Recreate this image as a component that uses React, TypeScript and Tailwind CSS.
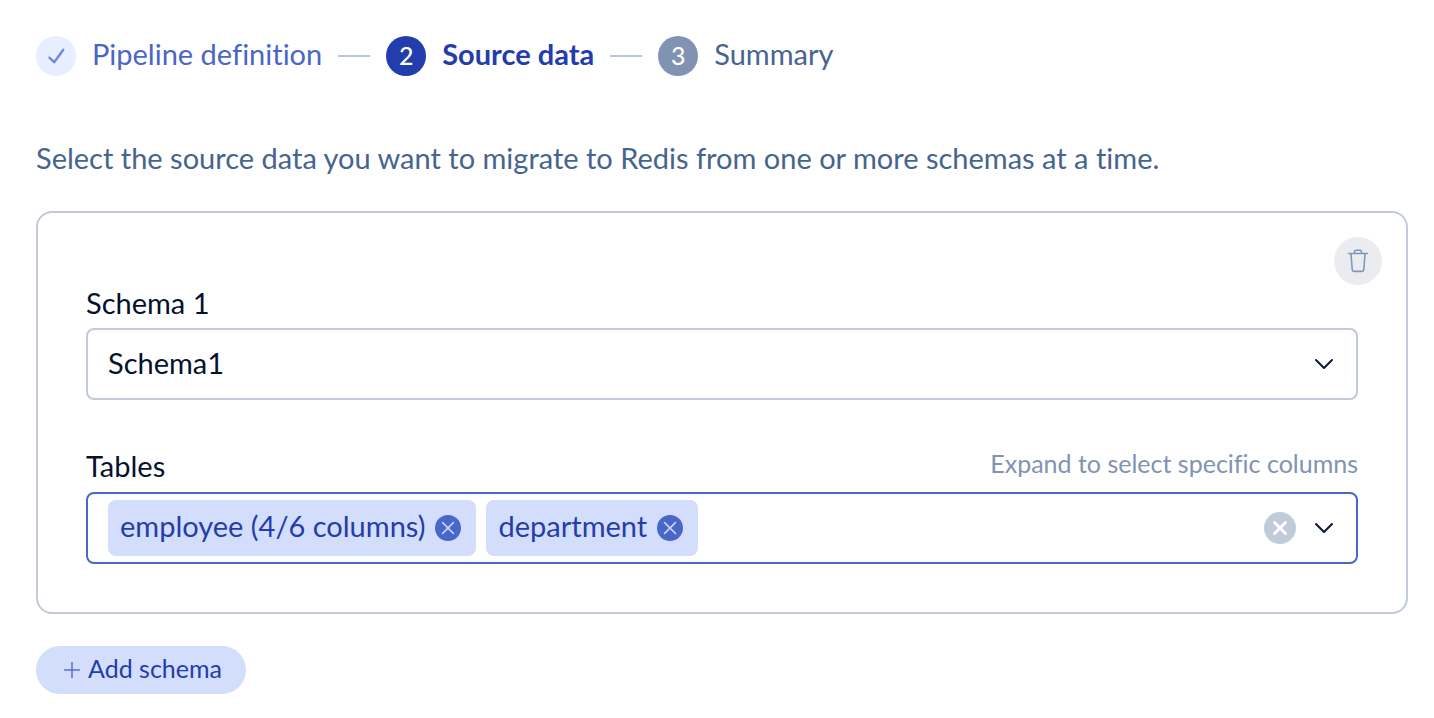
import { useState } from "react";

function CheckIcon() {
  return (
    <svg className="size-5" viewBox="0 0 20 20" fill="none" stroke="#7186dc" strokeWidth="2.3" strokeLinecap="round" strokeLinejoin="round" aria-hidden="true">
      <path d="M3.4 11.6 8.2 16.2 17.3 3.8" />
    </svg>
  );
}

function TrashIcon() {
  return (
    <svg className="size-6" viewBox="0 0 24 24" fill="none" stroke="#7f97b8" strokeWidth="1.6" strokeLinecap="round" strokeLinejoin="round" aria-hidden="true">
      <path d="M2.5 4.5h19M8.5 4.2V2.8C8.5 1.8 9 1.3 10 1.3h4c1 0 1.5.5 1.5 1.5v1.4M5 4.8l1.2 15.4c.1 1.4.8 2.2 2 2.2h7.6c1.2 0 1.9-.8 2-2.2L19 4.8" />
    </svg>
  );
}

function ChevronIcon() {
  return (
    <svg className="size-6" viewBox="0 0 24 24" fill="none" stroke="#091a33" strokeWidth="2" strokeLinecap="round" strokeLinejoin="round" aria-hidden="true">
      <path d="m4 8 8 8 8-8" />
    </svg>
  );
}

function Divider() {
  return <span className="h-0.5 w-8 shrink-0 bg-[#b9c6d8]" aria-hidden="true" />;
}

function Tag({ label, onRemove }: { label: string; onRemove: () => void }) {
  return (
    <li className="flex h-14 items-center gap-2.5 rounded-lg bg-[#d3defc] pr-[15px] pl-3 text-[#243dac]">
      <span className="pb-1">{label}</span>
      <button type="button" aria-label={"Remove " + label} onClick={onRemove} className="cursor-pointer">
        <svg className="size-[26px]" viewBox="0 0 26 26" aria-hidden="true">
          <circle cx="13" cy="13" r="13" fill="#4966c9" />
          <path d="m7.5 7.5 11 11m0-11-11 11" stroke="#d3defc" strokeWidth="1.6" strokeLinecap="round" />
        </svg>
      </button>
    </li>
  );
}

export default function App() {
  const [tables, setTables] = useState(["employee (4/6 columns)", "department"]);

  return (
    <main className="pt-9 pr-[26px] pb-6 pl-9 font-['Lato','Open_Sans',sans-serif] text-[29px] leading-9 font-normal text-[#04122e] [font-variant-ligatures:none]">
      <ol className="flex items-center gap-4 whitespace-nowrap">
        <li className="flex items-center gap-4 text-[#4966c9]">
          <span className="flex size-10 items-center justify-center rounded-full bg-[#e6eeff]">
            <CheckIcon />
          </span>
          <span className="self-start">Pipeline definition</span>
          <Divider />
        </li>
        <li className="flex items-center gap-4 font-bold text-[#243dac]" aria-current="step">
          <span className="flex size-10 items-center justify-center rounded-full bg-[#243dac] pb-0.5 text-[25px] font-medium text-white">2</span>
          <span className="self-start">Source data</span>
          <Divider />
        </li>
        <li className="flex items-center gap-4 text-[#466490]">
          <span className="flex size-10 items-center justify-center rounded-full bg-[#8193b2] pb-0.5 text-[25px] font-medium text-white">3</span>
          <span className="self-start">Summary</span>
        </li>
      </ol>

      <p className="mt-16 text-[#466490]">Select the source data you want to migrate to Redis from one or more schemas at a time.</p>

      <section className="mt-[35px] rounded-2xl border-2 border-[#c1cada] pt-6 pb-12">
        <div className="flex justify-end pr-6">
          <button type="button" aria-label="Delete schema" className="flex size-12 cursor-pointer items-center justify-center rounded-full bg-[#ebecf0]">
            <TrashIcon />
          </button>
        </div>

        <div className="px-12">
          <label htmlFor="schema" className="block">Schema 1</label>
          <div className="mt-[7px] grid items-center">
            <select id="schema" className="col-start-1 row-start-1 h-[72px] w-full appearance-none rounded-lg border-2 border-[#c1cada] bg-white px-5 pb-0.5">
              <option>Schema1</option>
            </select>
            <span className="pointer-events-none col-start-1 row-start-1 mr-[22px] justify-self-end">
              <ChevronIcon />
            </span>
          </div>

          <div className="mt-12 flex items-start justify-between">
            <label htmlFor="tables">Tables</label>
            <span className="text-[25px] leading-[30px] text-[#8193b2]">Expand to select specific columns</span>
          </div>
          <div className="mt-2 flex h-[72px] items-center rounded-lg border-2 border-[#4966c9] bg-white px-5">
            <ul className="flex gap-2.5 whitespace-nowrap">
              {tables.map((t) => (
                <Tag key={t} label={t} onRemove={() => setTables(tables.filter((x) => x !== t))} />
              ))}
            </ul>
            <input id="tables" type="text" className="min-w-0 flex-1 px-2 outline-none" />
            <button type="button" aria-label="Clear tables" onClick={() => setTables([])} className="cursor-pointer">
              <svg className="size-8" viewBox="0 0 32 32" aria-hidden="true">
                <circle cx="16" cy="16" r="16" fill="#c1cada" />
                <path d="m10.5 10.5 11 11m0-11-11 11" stroke="#fff" strokeWidth="3" strokeLinecap="round" />
              </svg>
            </button>
            <button type="button" aria-label="Show tables" className="ml-4 cursor-pointer">
              <ChevronIcon />
            </button>
          </div>
        </div>
      </section>

      <button type="button" className="mt-8 flex h-12 cursor-pointer items-center gap-2 rounded-full bg-[#d3defc] pr-6 pl-7 text-[25px] text-[#243dac]">
        <svg className="size-4" viewBox="0 0 16 16" stroke="#5b70cb" strokeWidth="1.5" aria-hidden="true">
          <path d="M8 0v16M0 8h16" />
        </svg>
        <span className="pb-1">Add schema</span>
      </button>
    </main>
  );
}
